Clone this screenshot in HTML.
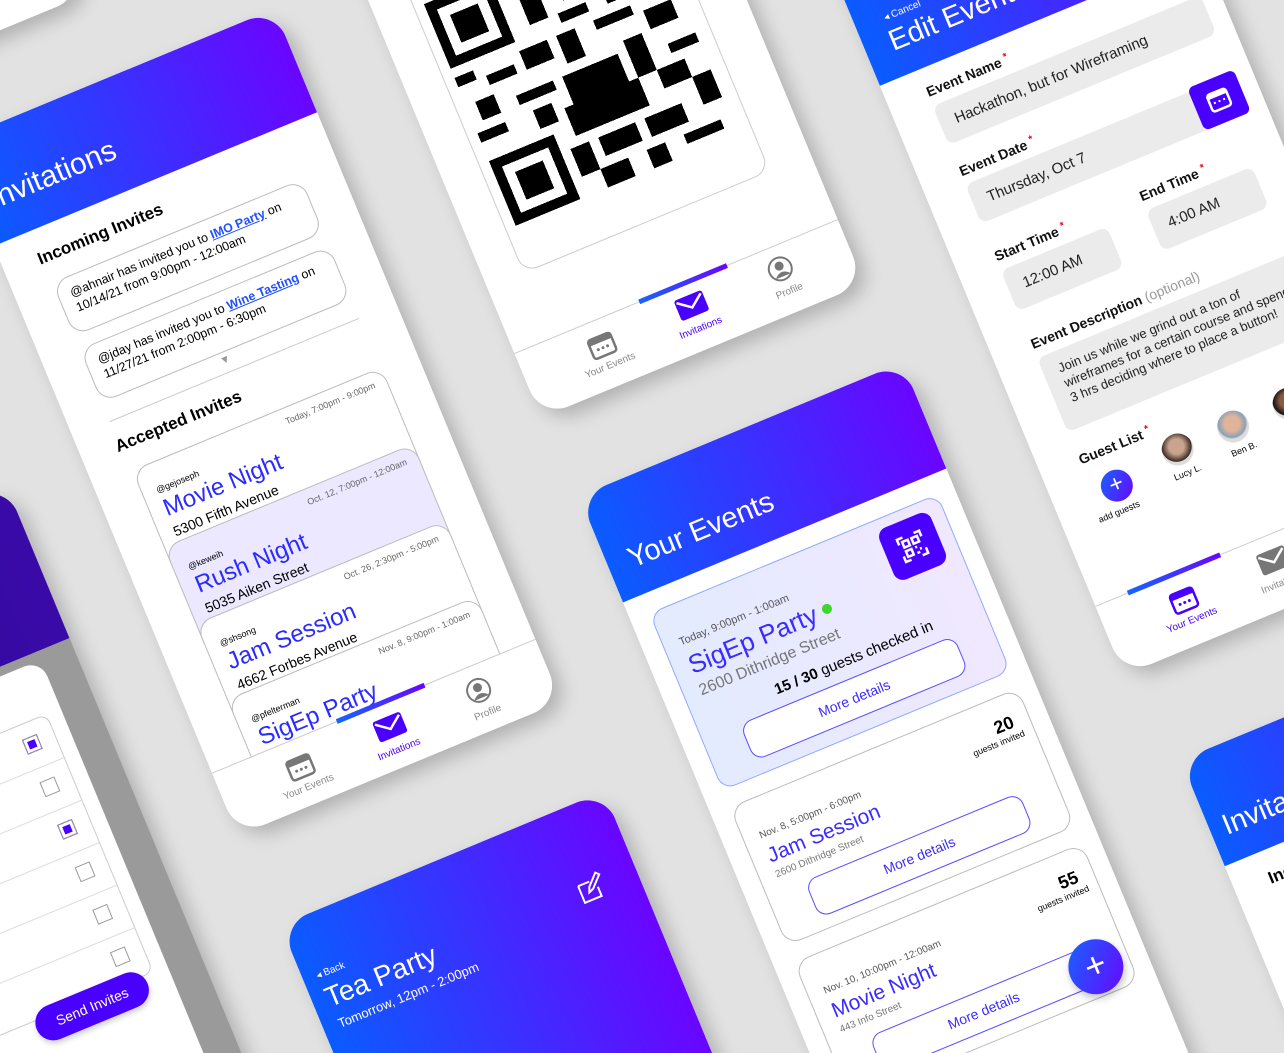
<!DOCTYPE html>
<html><head><meta charset="utf-8"><style>
*{box-sizing:border-box;margin:0;padding:0}
html,body{width:1284px;height:1053px;overflow:hidden}
body{background:#e2e2e2;font-family:"Liberation Sans",sans-serif;position:relative}
#clip{position:absolute;left:0;top:0;width:1284px;height:1053px;overflow:hidden}
#w{position:absolute;left:0;top:0;transform:rotate(-22.5deg);transform-origin:0 0}
.card{position:absolute;background:#fff;border-radius:30px;overflow:hidden;box-shadow:6px 10px 18px rgba(0,0,0,.22)}
.hd{position:absolute;left:0;top:0;width:100%;background:linear-gradient(90deg,#0a5cff,#6a05ff)}
.ab{position:absolute}
.t{position:absolute;white-space:nowrap}
.nav{position:absolute;left:0;width:100%;height:75px;border-top:1px solid #ccc;background:#fff}
.bar{position:absolute;top:-3px;height:5px;background:linear-gradient(90deg,#1565ff,#6a05ff)}
.ni{position:absolute;font-size:10px;color:#888;text-align:center;width:70px}
.inp{position:absolute;background:#ebebeb;border-radius:8px;font-size:15px;color:#222;padding:12px 16px;white-space:nowrap}
.lb{position:absolute;font-size:14px;font-weight:bold;color:#111;white-space:nowrap}
.lb i{color:#e00;font-style:normal;font-size:10px;vertical-align:top}
.ev{position:absolute;background:#fff;border:1px solid #bbb;border-radius:16px}
.md{position:absolute;border:1.5px solid #5a4bff;border-radius:12px;background:#fff;text-align:center;color:#3d2bff;font-size:14px;padding:11px 0}
.cb{position:absolute;right:16px;width:16px;height:16px;border:1px solid #999}
.on{background:#4a00ff;box-shadow:inset 0 0 0 3px #fff}
.rl{position:absolute;left:0;width:100%;border-top:1px solid #ddd}
</style></head><body>
<div id="clip">
<div id="w">
<div class="card" style="left:-420px;top:-800px;width:500px;height:828px"></div>

<div class="card" style="left:-570px;top:450px;width:390px;height:900px;background:#9a9a9a">
 <div class="hd" style="height:166px;background:linear-gradient(90deg,#2a0a90,#3a0aa8)"></div>
 <div class="ab" style="left:0;top:175px;width:355px;height:700px;background:#fff;border-radius:18px">
  <div class="ab" style="left:20px;top:52px;width:320px;height:280px;border:1px solid #ccc;border-radius:10px">
   <div class="t" style="left:18px;top:14px;font-size:14px">Kevin</div><div class="cb on" style="top:14px"></div>
   <div class="rl" style="top:46px"></div>
   <div class="t" style="left:18px;top:60px;font-size:14px">Alex</div><div class="cb" style="top:60px"></div>
   <div class="rl" style="top:92px"></div>
   <div class="t" style="left:18px;top:106px;font-size:14px">Shen</div><div class="cb on" style="top:106px"></div>
   <div class="rl" style="top:138px"></div>
   <div class="t" style="left:18px;top:152px;font-size:14px">Doug</div><div class="cb" style="top:152px"></div>
   <div class="rl" style="top:184px"></div>
   <div class="t" style="left:18px;top:198px;font-size:14px">Anita</div><div class="cb" style="top:198px"></div>
   <div class="rl" style="top:230px"></div>
   <div class="t" style="left:18px;top:244px;font-size:14px">Yoda</div><div class="cb" style="top:244px"></div>
  </div>
  <div class="ab" style="left:210px;top:322px;width:120px;height:36px;background:#4a00ff;border-radius:18px;color:#fff;font-size:14px;text-align:center;line-height:36px;box-shadow:0 3px 6px rgba(0,0,0,.2)">Send Invites</div>
 </div>
</div>

<div class="card" style="left:-100px;top:113px;width:350px;height:750px">
 <div class="hd" style="height:112px"></div>
 <div class="t" style="left:14px;top:52px;font-size:30px;color:#fff">Invitations</div>
 <div class="t" style="left:36px;top:132px;font-size:17px;font-weight:bold">Incoming Invites</div>
 <div class="ev" style="left:40px;top:168px;width:270px;height:58px;padding:8px 12px;font-size:12.5px;line-height:16px">@ahnair has invited you to <u style="color:#1f4fff;font-weight:bold">IMO Party</u> on<br>10/14/21 from 9:00pm - 12:00am</div>
 <div class="ev" style="left:40px;top:240px;width:270px;height:58px;padding:8px 12px;font-size:12.5px;line-height:16px">@jday has invited you to <u style="color:#1f4fff;font-weight:bold">Wine Tasting</u> on<br>11/27/21 from 2:00pm - 6:30pm</div>
 <div class="t" style="left:165px;top:300px;font-size:11px;color:#999">▼</div>
 <div class="ab" style="left:40px;top:318px;width:270px;border-top:1px solid #ccc"></div>
 <div class="t" style="left:36px;top:335px;font-size:17px;font-weight:bold">Accepted Invites</div>
 <div class="ev" style="left:42px;top:372px;width:270px;height:120px;background:#fff">
  <div class="t" style="right:12px;top:8px;font-size:9px;color:#666">Today, 7:00pm - 9:00pm</div>
  <div class="t" style="left:14px;top:22px;font-size:9px">@gejoseph</div>
  <div class="t" style="left:14px;top:34px;font-size:24px;color:#2b2bff">Movie Night</div>
  <div class="t" style="left:14px;top:64px;font-size:14px">5300 Fifth Avenue</div>
 </div>
 <div class="ev" style="left:42px;top:455px;width:270px;height:120px;background:#ebe8ff">
  <div class="t" style="right:12px;top:8px;font-size:9px;color:#666">Oct. 12, 7:00pm - 12:00am</div>
  <div class="t" style="left:14px;top:22px;font-size:9px">@keweih</div>
  <div class="t" style="left:14px;top:34px;font-size:24px;color:#2b2bff">Rush Night</div>
  <div class="t" style="left:14px;top:64px;font-size:14px">5035 Aiken Street</div>
 </div>
 <div class="ev" style="left:42px;top:538px;width:270px;height:120px">
  <div class="t" style="right:12px;top:8px;font-size:9px;color:#666">Oct. 26, 2:30pm - 5:00pm</div>
  <div class="t" style="left:14px;top:22px;font-size:9px">@shsong</div>
  <div class="t" style="left:14px;top:34px;font-size:24px;color:#2b2bff">Jam Session</div>
  <div class="t" style="left:14px;top:64px;font-size:14px">4662 Forbes Avenue</div>
 </div>
 <div class="ev" style="left:42px;top:620px;width:270px;height:120px">
  <div class="t" style="right:12px;top:8px;font-size:9px;color:#666">Nov. 8, 9:00pm - 1:00am</div>
  <div class="t" style="left:14px;top:22px;font-size:9px">@pfelterman</div>
  <div class="t" style="left:14px;top:34px;font-size:24px;color:#2b2bff">SigEp Party</div>
 </div>
 <div class="nav" style="top:682px">
  <div class="bar" style="left:135px;width:95px"></div>
  <svg class="ab" style="left:70px;top:14px" width="28" height="26" viewBox="0 0 28 26"><rect x="2" y="4" width="24" height="20" rx="3" fill="none" stroke="#777" stroke-width="2.5"/><rect x="2" y="4" width="24" height="6" fill="#777"/><circle cx="9" cy="16" r="1.5" fill="#777"/><circle cx="14" cy="16" r="1.5" fill="#777"/><circle cx="19" cy="16" r="1.5" fill="#777"/></svg>
  <div class="ni" style="left:49px;top:44px">Your Events</div>
  <svg class="ab" style="left:167px;top:14px" width="30" height="22" viewBox="0 0 30 22"><rect x="0" y="0" width="30" height="22" rx="3" fill="#4a00ff"/><path d="M2 3 L15 13 L28 3" stroke="#fff" stroke-width="2.5" fill="none"/></svg>
  <div class="ni" style="left:147px;top:44px;color:#4a00ff">Invitations</div>
  <svg class="ab" style="left:265px;top:12px" width="26" height="26" viewBox="0 0 26 26"><circle cx="13" cy="13" r="11.5" fill="none" stroke="#777" stroke-width="2"/><circle cx="13" cy="10" r="4.5" fill="#777"/><path d="M5 21 Q13 12 21 21" fill="#777"/></svg>
  <div class="ni" style="left:243px;top:44px">Profile</div>
 </div>
</div>

<div class="card" style="left:340px;top:-142px;width:350px;height:735px">
 <div class="ab" style="left:39px;top:140px;width:267px;height:455px;border:1px solid #ccc;border-radius:16px"></div>
 <div class="t" style="left:50px;top:282px;font-size:15px;color:#3b2bff;text-decoration:underline">See Event Details</div>
 <svg class="ab" style="left:50px;top:308px" width="240" height="240" viewBox="0 0 24 24" shape-rendering="crispEdges">
  <g fill="#000">
  <path d="M0 0h7v7h-7zM1 1v5h5v-5zM2 2h3v3h-3z" fill-rule="evenodd"/>
  <path d="M17 0h7v7h-7zM18 1v5h5v-5zM19 2h3v3h-3z" fill-rule="evenodd"/>
  <path d="M0 17h7v7h-7zM1 18v5h5v-5zM2 19h3v3h-3z" fill-rule="evenodd"/>
  <rect x="8" y="0" width="2" height="2"/><rect x="11" y="1" width="3" height="1"/><rect x="9" y="3" width="2" height="3"/><rect x="13" y="3" width="2" height="2"/><rect x="12" y="6" width="3" height="1"/>
  <rect x="0" y="8" width="2" height="1"/><rect x="3" y="9" width="3" height="1"/><rect x="7" y="8" width="3" height="2"/><rect x="11" y="8" width="2" height="3"/><rect x="15" y="8" width="4" height="1"/><rect x="20" y="9" width="3" height="2"/>
  <rect x="1" y="11" width="2" height="2"/><rect x="5" y="12" width="4" height="1"/><rect x="10" y="12" width="6" height="3"/><rect x="17" y="11" width="2" height="4"/><rect x="21" y="13" width="3" height="1"/>
  <rect x="0" y="14" width="3" height="1"/><rect x="6" y="14" width="2" height="2"/><rect x="9" y="15" width="8" height="3"/><rect x="19" y="15" width="3" height="2"/><rect x="22" y="17" width="2" height="3"/>
  <rect x="8" y="19" width="2" height="3"/><rect x="11" y="19" width="4" height="2"/><rect x="16" y="19" width="4" height="2"/><rect x="10" y="22" width="3" height="2"/><rect x="15" y="22" width="2" height="2"/><rect x="19" y="22" width="4" height="1"/>
  </g></svg>
 <div class="nav" style="top:665px;height:70px">
  <div class="bar" style="left:135px;width:95px"></div>
  <svg class="ab" style="left:70px;top:12px" width="28" height="26" viewBox="0 0 28 26"><rect x="2" y="4" width="24" height="20" rx="3" fill="none" stroke="#777" stroke-width="2.5"/><rect x="2" y="4" width="24" height="6" fill="#777"/><circle cx="9" cy="16" r="1.5" fill="#777"/><circle cx="14" cy="16" r="1.5" fill="#777"/><circle cx="19" cy="16" r="1.5" fill="#777"/></svg>
  <div class="ni" style="left:49px;top:42px">Your Events</div>
  <svg class="ab" style="left:167px;top:12px" width="30" height="22" viewBox="0 0 30 22"><rect width="30" height="22" rx="3" fill="#4a00ff"/><path d="M2 3 L15 13 L28 3" stroke="#fff" stroke-width="2.5" fill="none"/></svg>
  <div class="ni" style="left:147px;top:42px;color:#4a00ff">Invitations</div>
  <svg class="ab" style="left:265px;top:10px" width="26" height="26" viewBox="0 0 26 26"><circle cx="13" cy="13" r="11.5" fill="none" stroke="#777" stroke-width="2"/><circle cx="13" cy="10" r="4.5" fill="#777"/><path d="M5 21 Q13 12 21 21" fill="#777"/></svg>
  <div class="ni" style="left:243px;top:42px">Profile</div>
 </div>
</div>

<div class="card" style="left:345px;top:680px;width:350px;height:900px">
 <div class="hd" style="height:115px"></div>
 <div class="t" style="left:22px;top:62px;font-size:29px;color:#fff">Your Events</div>
 <div class="ab" style="left:20px;top:135px;width:312px;height:192px;border:1px solid #8fa8ff;border-radius:14px;background:linear-gradient(90deg,#e3ebff,#f0e8ff)">
  <div class="ab" style="right:14px;top:10px;width:56px;height:56px;background:#4a00ff;border-radius:10px"><svg width="56" height="56" viewBox="0 0 56 56"><g fill="none" stroke="#fff" stroke-width="2.5"><path d="M16 22v-6h6M34 16h6v6M40 34v6h-6M22 40h-6v-6"/><rect x="20" y="20" width="6" height="6"/><rect x="30" y="20" width="6" height="6"/><rect x="20" y="30" width="6" height="6"/><path d="M30 30h2M34 33h2M30 36h3"/></g></svg></div>
  <div class="t" style="left:16px;top:32px;font-size:11px;color:#555">Today, 9:00pm - 1:00am</div>
  <div class="t" style="left:16px;top:48px;font-size:26px;color:#3b2bff">SigEp Party</div>
  <div class="ab" style="left:160px;top:58px;width:10px;height:10px;border-radius:50%;background:#3dd62c"></div>
  <div class="t" style="left:16px;top:82px;font-size:16px;color:#777">2600 Dithridge Street</div>
  <div class="t" style="left:86px;top:110px;font-size:15px"><b>15 / 30</b> guests checked in</div>
  <div class="md" style="left:40px;top:136px;width:232px;height:40px">More details</div>
 </div>
 <div class="ev" style="left:20px;top:345px;width:312px;height:150px">
  <div class="t" style="left:16px;top:32px;font-size:10px;color:#555">Nov. 8, 5:00pm - 6:00pm</div>
  <div class="t" style="right:16px;top:18px;font-size:18px;font-weight:bold">20</div>
  <div class="t" style="right:10px;top:38px;font-size:9px">guests invited</div>
  <div class="t" style="left:16px;top:48px;font-size:21px;color:#3b2bff">Jam Session</div>
  <div class="t" style="left:16px;top:74px;font-size:10px;color:#777">2600 Dithridge Street</div>
  <div class="md" style="left:40px;top:96px;width:232px;height:40px">More details</div>
 </div>
 <div class="ev" style="left:20px;top:513px;width:312px;height:150px">
  <div class="t" style="left:16px;top:32px;font-size:10px;color:#555">Nov. 10, 10:00pm - 12:00am</div>
  <div class="t" style="right:16px;top:18px;font-size:18px;font-weight:bold">55</div>
  <div class="t" style="right:10px;top:38px;font-size:9px">guests invited</div>
  <div class="t" style="left:16px;top:48px;font-size:21px;color:#3b2bff">Movie Night</div>
  <div class="t" style="left:16px;top:74px;font-size:10px;color:#777">443 Info Street</div>
  <div class="md" style="left:40px;top:96px;width:232px;height:40px">More details</div>
 </div>
 <div class="ab" style="left:270px;top:605px;width:55px;height:55px;border-radius:50%;background:linear-gradient(135deg,#1565ff,#6a05ff);color:#fff;font-size:36px;text-align:center;line-height:52px;box-shadow:0 4px 8px rgba(0,0,0,.25)">+</div>
</div>

<div class="card" style="left:780px;top:200px;width:350px;height:854px">
 <div class="hd" style="height:216px"></div>
 <div class="t" style="left:30px;top:150px;font-size:10px;color:#fff">◂ Cancel</div>
 <div class="t" style="left:26px;top:164px;font-size:29px;color:#fff">Edit Event</div>
 <div class="lb" style="left:41px;top:232px">Event Name <i>*</i></div>
 <div class="inp" style="left:41px;top:255px;width:290px;height:42px">Hackathon, but for Wireframing</div>
 <div class="lb" style="left:41px;top:318px">Event Date <i>*</i></div>
 <div class="inp" style="left:41px;top:340px;width:290px;height:42px">Thursday, Oct 7</div>
 <div class="ab" style="left:283px;top:336px;width:50px;height:46px;background:#4a00ff;border-radius:6px"><svg width="50" height="46" viewBox="0 0 50 46"><rect x="15" y="14" width="20" height="18" rx="3" fill="none" stroke="#fff" stroke-width="2.5"/><rect x="15" y="14" width="20" height="5" fill="#fff"/><path d="M19 24h2M24 24h2M29 24h2" stroke="#fff" stroke-width="2"/></svg></div>
 <div class="lb" style="left:41px;top:410px">Start Time <i>*</i></div>
 <div class="inp" style="left:41px;top:433px;width:115px;height:44px">12:00 AM</div>
 <div class="lb" style="left:198px;top:410px">End Time <i>*</i></div>
 <div class="inp" style="left:198px;top:433px;width:115px;height:44px">4:00 AM</div>
 <div class="lb" style="left:41px;top:505px">Event Description <span style="color:#999;font-weight:normal">(optional)</span></div>
 <div class="inp" style="left:41px;top:528px;width:330px;height:80px;font-size:13px;line-height:16px;padding:10px 16px">Join us while we grind out a ton of<br>wireframes for a certain course and spend<br>3 hrs deciding where to place a button!</div>
 <div class="lb" style="left:41px;top:630px">Guest List <i>*</i></div>
 <div class="ab" style="left:50px;top:660px;width:32px;height:32px;border-radius:50%;background:linear-gradient(135deg,#1565ff,#6a05ff);color:#fff;font-size:24px;text-align:center;line-height:30px">+</div>
 <div class="t" style="left:36px;top:696px;font-size:9px">add guests</div>
 <div class="ab" style="left:120px;top:650px;width:32px;height:32px;border-radius:50%;background:radial-gradient(circle at 50% 40%,#c9a58f 30%,#3a2a22 60%,#ddd 62%)"></div>
 <div class="t" style="left:122px;top:686px;font-size:9px">Lucy L.</div>
 <div class="ab" style="left:180px;top:650px;width:32px;height:32px;border-radius:50%;background:radial-gradient(circle at 50% 40%,#e0b49a 30%,#8aa0b8 55%,#ddd 62%)"></div>
 <div class="t" style="left:184px;top:686px;font-size:9px">Ben B.</div>
 <div class="ab" style="left:240px;top:650px;width:32px;height:32px;border-radius:50%;background:radial-gradient(circle at 50% 40%,#8a5a40 30%,#111 58%,#ddd 62%)"></div>
 <div class="t" style="left:244px;top:686px;font-size:9px">Sam</div>
 <div class="ab" style="left:310px;top:660px;width:32px;height:32px;border-radius:50%;background:#4a00ff"></div>
 <div class="nav" style="top:779px">
  <div class="bar" style="left:35px;width:100px"></div>
  <svg class="ab" style="left:70px;top:14px" width="28" height="26" viewBox="0 0 28 26"><rect x="2" y="4" width="24" height="20" rx="3" fill="none" stroke="#4a00ff" stroke-width="2.5"/><rect x="2" y="4" width="24" height="6" fill="#4a00ff"/><circle cx="9" cy="16" r="1.5" fill="#4a00ff"/><circle cx="14" cy="16" r="1.5" fill="#4a00ff"/><circle cx="19" cy="16" r="1.5" fill="#4a00ff"/></svg>
  <div class="ni" style="left:49px;top:44px;color:#4a00ff">Your Events</div>
  <svg class="ab" style="left:167px;top:14px" width="30" height="22" viewBox="0 0 30 22"><rect width="30" height="22" rx="3" fill="#777"/><path d="M2 3 L15 13 L28 3" stroke="#fff" stroke-width="2.5" fill="none"/></svg>
  <div class="ni" style="left:147px;top:44px">Invitations</div>
 </div>
</div>

<div class="card" style="left:-95px;top:962px;width:350px;height:700px">
 <div class="hd" style="height:700px"></div>
 <div class="t" style="left:14px;top:56px;font-size:10px;color:#fff">◂ Back</div>
 <div class="t" style="left:14px;top:70px;font-size:28px;color:#fff">Tea Party</div>
 <div class="t" style="left:16px;top:106px;font-size:13px;color:#fff">Tomorrow, 12pm - 2:00pm</div>
 <svg class="ab" style="left:286px;top:70px" width="30" height="30" viewBox="0 0 30 30"><path d="M4 8h12M4 8v18h18v-10" fill="none" stroke="#fff" stroke-width="2"/><path d="M12 18l2-5 11-11 3 3-11 11z" fill="none" stroke="#fff" stroke-width="2"/></svg>
</div>

<div class="card" style="left:800px;top:1154px;width:350px;height:600px">
 <div class="hd" style="height:115px"></div>
 <div class="t" style="left:14px;top:62px;font-size:29px;color:#fff">Invitations</div>
 <div class="t" style="left:36px;top:134px;font-size:17px;font-weight:bold">Incoming Invites</div>
</div>
</div>
</div>
</body></html>
